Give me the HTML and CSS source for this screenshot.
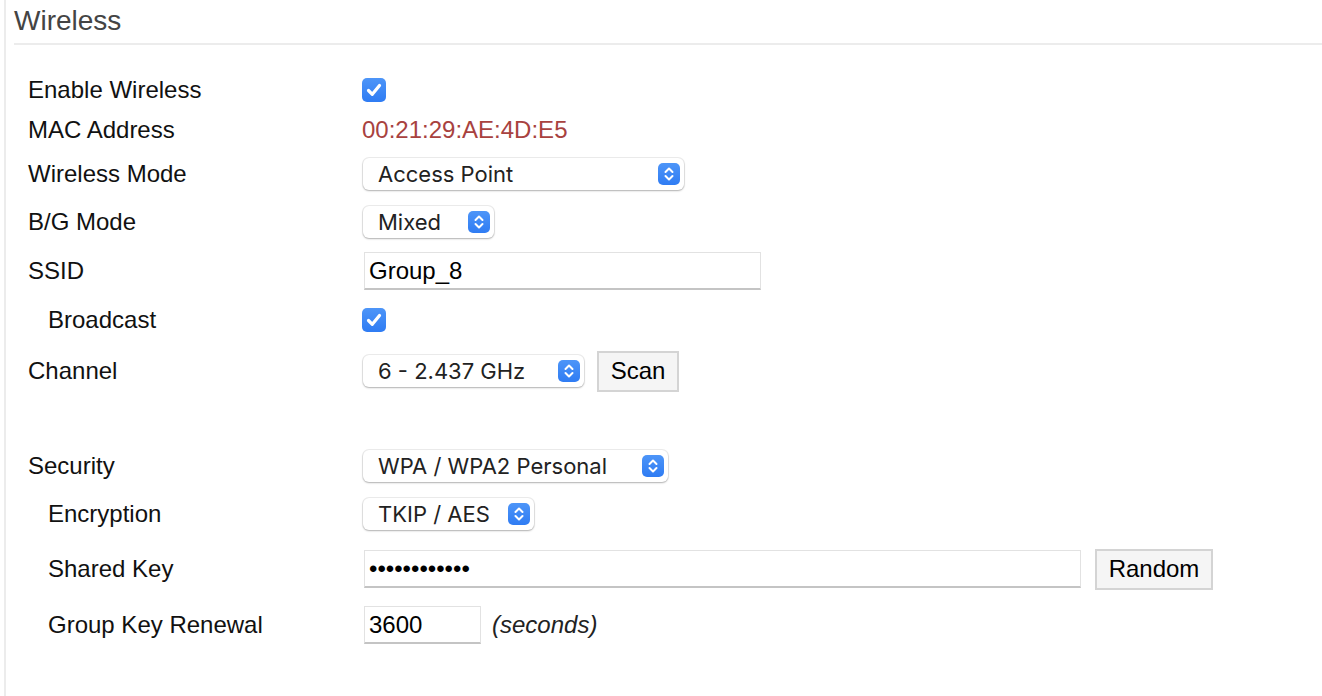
FILE: index.html
```html
<!DOCTYPE html>
<html>
<head>
<meta charset="utf-8">
<link rel="stylesheet" href="styles.css">
</head>
<body>
<div class="panel">
  <h2 class="panel-title">Wireless</h2>
  <div class="form">
    <div class="label">Enable Wireless</div>
    <div class="value"><span class="check"><svg viewBox="0 0 24 24" width="24" height="24"><path d="M6.5 12.5 L10.3 16.3 L17.5 7.5" fill="none" stroke="#fff" stroke-width="3.2" stroke-linecap="round" stroke-linejoin="round"/></svg></span></div>

    <div class="label">MAC Address</div>
    <div class="value"><span class="mac">00:21:29:AE:4D:E5</span></div>

    <div class="label">Wireless Mode</div>
    <div class="value"><div class="select w-mode"><span>Access Point</span><span class="stepper"><svg viewBox="0 0 22 22" width="22" height="22"><path d="M7.5 9 L11 5.5 L14.5 9 M7.5 13 L11 16.5 L14.5 13" fill="none" stroke="#fff" stroke-width="2" stroke-linecap="round" stroke-linejoin="round"/></svg></span></div></div>

    <div class="label">B/G Mode</div>
    <div class="value"><div class="select w-bg"><span>Mixed</span><span class="stepper"><svg viewBox="0 0 22 22" width="22" height="22"><path d="M7.5 9 L11 5.5 L14.5 9 M7.5 13 L11 16.5 L14.5 13" fill="none" stroke="#fff" stroke-width="2" stroke-linecap="round" stroke-linejoin="round"/></svg></span></div></div>

    <div class="label">SSID</div>
    <div class="value"><input class="text w-ssid" type="text" value="Group_8"></div>

    <div class="label sub">Broadcast</div>
    <div class="value"><span class="check"><svg viewBox="0 0 24 24" width="24" height="24"><path d="M6.5 12.5 L10.3 16.3 L17.5 7.5" fill="none" stroke="#fff" stroke-width="3.2" stroke-linecap="round" stroke-linejoin="round"/></svg></span></div>

    <div class="label">Channel</div>
    <div class="value"><div class="select w-chan"><span>6 - 2.437 GHz</span><span class="stepper"><svg viewBox="0 0 22 22" width="22" height="22"><path d="M7.5 9 L11 5.5 L14.5 9 M7.5 13 L11 16.5 L14.5 13" fill="none" stroke="#fff" stroke-width="2" stroke-linecap="round" stroke-linejoin="round"/></svg></span></div><button class="btn w-scan">Scan</button></div>

    <div class="spacer"></div>

    <div class="label">Security</div>
    <div class="value"><div class="select w-sec"><span>WPA / WPA2 Personal</span><span class="stepper"><svg viewBox="0 0 22 22" width="22" height="22"><path d="M7.5 9 L11 5.5 L14.5 9 M7.5 13 L11 16.5 L14.5 13" fill="none" stroke="#fff" stroke-width="2" stroke-linecap="round" stroke-linejoin="round"/></svg></span></div></div>

    <div class="label sub">Encryption</div>
    <div class="value"><div class="select w-enc"><span>TKIP / AES</span><span class="stepper"><svg viewBox="0 0 22 22" width="22" height="22"><path d="M7.5 9 L11 5.5 L14.5 9 M7.5 13 L11 16.5 L14.5 13" fill="none" stroke="#fff" stroke-width="2" stroke-linecap="round" stroke-linejoin="round"/></svg></span></div></div>

    <div class="label sub">Shared Key</div>
    <div class="value"><input class="text w-key" type="password" value="abcdefghijkl"><button class="btn w-rand">Random</button></div>

    <div class="label sub">Group Key Renewal</div>
    <div class="value"><input class="text w-renew" type="text" value="3600"><span class="unit">(seconds)</span></div>
  </div>
</div>
</body>
</html>
```

FILE: styles.css
```css
html, body {
  margin: 0;
  padding: 0;
  background: #fff;
}

body {
  font-family: "Liberation Sans", Arial, sans-serif;
  color: #111;
}

.panel {
  margin-left: 4px;
  border-left: 2px solid #ececec;
  padding-left: 8px;
  min-height: 696px;
  box-sizing: border-box;
}

.panel-title {
  margin: 0;
  padding-top: 4px;
  padding-bottom: 5px;
  font-size: 28px;
  line-height: 34px;
  font-weight: normal;
  color: #444;
  border-bottom: 2px solid #ececec;
}

.form {
  display: grid;
  grid-template-columns: 334px 1fr;
  grid-template-rows: 40px 40px 48px 48px 50px 48px 54px 42px 52px 44px 66px 46px;
  margin-top: 25px;
  padding-left: 14px;
  align-items: center;
  font-size: 24px;
}

.label {
  color: #111;
  line-height: 28px;
}

.label.sub {
  padding-left: 20px;
}

.spacer {
  grid-column: 1 / 3;
}

.value {
  display: flex;
  align-items: center;
}

.check {
  display: inline-flex;
  width: 24px;
  height: 24px;
  border-radius: 5px;
  background: linear-gradient(#4d95f8, #2f7cf3);
}

.mac {
  color: #a8423f;
  line-height: 28px;
}

.select {
  box-sizing: border-box;
  height: 32px;
  margin-left: 1px;
  padding: 0 4px 0 15px;
  display: flex;
  align-items: center;
  justify-content: space-between;
  background: #fff;
  border-radius: 6px;
  box-shadow: 0 0 0 1px rgba(0, 0, 0, 0.07), 0 1px 2px rgba(0, 0, 0, 0.25);
  font-family: Inter, "Noto Sans", sans-serif;
  font-size: 22px;
  color: #222;
}

.stepper {
  display: inline-flex;
  width: 22px;
  height: 22px;
  border-radius: 5px;
  background: linear-gradient(#4d95f8, #2f7cf3);
}

.w-mode { width: 321px; }
.w-bg { width: 131px; }
.w-chan { width: 221px; }
.w-sec { width: 305px; }
.w-enc { width: 171px; }

.text {
  box-sizing: border-box;
  height: 38px;
  margin: 0 0 0 2px;
  padding: 0 4px;
  border: 1px solid #e2e2e2;
  border-bottom: 2px solid #c4c4c4;
  border-radius: 0;
  font-family: "Liberation Sans", Arial, sans-serif;
  font-size: 24px;
  color: #000;
  background: #fff;
  outline: none;
}

.w-ssid { width: 397px; }
.w-key { width: 717px; }
.w-renew { width: 117px; }

.btn {
  box-sizing: border-box;
  height: 41px;
  margin-left: 13px;
  padding: 0;
  background: #f5f5f5;
  border: 2px solid #d4d4d4;
  border-radius: 0;
  font-family: "Liberation Sans", Arial, sans-serif;
  font-size: 24px;
  color: #000;
}

.w-scan { width: 82px; }
.w-rand { width: 118px; margin-left: 14px; }

.unit {
  margin-left: 11px;
  font-style: italic;
  color: #222;
}
```
